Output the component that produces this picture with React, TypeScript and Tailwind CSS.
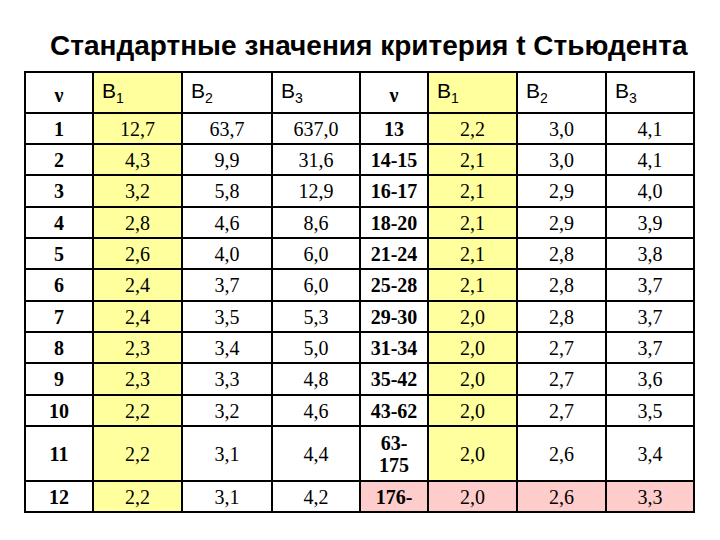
import React from 'react'

type Row = {
  n: string
  a: [string, string, string]
  m: string
  b: [string, string, string]
  h: number
}

const rows: Row[] = [
  { n: '1', a: ['12,7', '63,7', '637,0'], m: '13', b: ['2,2', '3,0', '4,1'], h: 31 },
  { n: '2', a: ['4,3', '9,9', '31,6'], m: '14-15', b: ['2,1', '3,0', '4,1'], h: 31 },
  { n: '3', a: ['3,2', '5,8', '12,9'], m: '16-17', b: ['2,1', '2,9', '4,0'], h: 32 },
  { n: '4', a: ['2,8', '4,6', '8,6'], m: '18-20', b: ['2,1', '2,9', '3,9'], h: 31 },
  { n: '5', a: ['2,6', '4,0', '6,0'], m: '21-24', b: ['2,1', '2,8', '3,8'], h: 31 },
  { n: '6', a: ['2,4', '3,7', '6,0'], m: '25-28', b: ['2,1', '2,8', '3,7'], h: 32 },
  { n: '7', a: ['2,4', '3,5', '5,3'], m: '29-30', b: ['2,0', '2,8', '3,7'], h: 31 },
  { n: '8', a: ['2,3', '3,4', '5,0'], m: '31-34', b: ['2,0', '2,7', '3,7'], h: 31 },
  { n: '9', a: ['2,3', '3,3', '4,8'], m: '35-42', b: ['2,0', '2,7', '3,6'], h: 32 },
  { n: '10', a: ['2,2', '3,2', '4,6'], m: '43-62', b: ['2,0', '2,7', '3,5'], h: 31 },
  { n: '11', a: ['2,2', '3,1', '4,4'], m: '63-175', b: ['2,0', '2,6', '3,4'], h: 55 },
  { n: '12', a: ['2,2', '3,1', '4,2'], m: '176-', b: ['2,0', '2,6', '3,3'], h: 31 },
]

const cell = 'border-2 border-black p-0 text-center align-middle'
const serif = "font-['Liberation_Serif',serif] text-[20px] leading-[22px]"

function BHead({ i, yellow }: { i: number; yellow?: boolean }) {
  return (
    <th
      className={`${cell} text-left align-bottom pb-[3px] pl-[8px] font-normal font-['Liberation_Sans',Arial,sans-serif] text-[21px] leading-[22px] ${yellow ? 'bg-[#ffff9e]' : 'bg-white'}`}
    >
      B<sub className="text-[14px] leading-none relative top-[5px] align-baseline">{i}</sub>
    </th>
  )
}

export default function App() {
  return (
    <div className="w-[720px] h-[540px] bg-white overflow-hidden">
      <h1 className="pt-[30px] pl-[50px] h-[71px] font-['Liberation_Sans',Arial,sans-serif] font-bold text-[28px] leading-[32px] text-black whitespace-nowrap">
        Стандартные значения критерия t Стьюдента
      </h1>
      <table className="ml-[24px] border-collapse table-fixed text-black">
        <colgroup>
          <col className="w-[68px]" />
          <col className="w-[89px]" />
          <col className="w-[90px]" />
          <col className="w-[88px]" />
          <col className="w-[68px]" />
          <col className="w-[89px]" />
          <col className="w-[89px]" />
          <col className="w-[88px]" />
        </colgroup>
        <thead>
          <tr className="h-[41px]">
            <th className={`${cell} ${serif} font-bold pt-[4px]`}>ν</th>
            <BHead i={1} yellow />
            <BHead i={2} />
            <BHead i={3} />
            <th className={`${cell} ${serif} font-bold pt-[4px]`}>ν</th>
            <BHead i={1} yellow />
            <BHead i={2} />
            <BHead i={3} />
          </tr>
        </thead>
        <tbody>
          {rows.map((r, idx) => {
            const last = idx === rows.length - 1
            const right = last ? 'bg-[#ffcccc]' : 'bg-white'
            return (
              <tr key={r.n} style={{ height: r.h }}>
                <td className={`${cell} ${serif} font-bold bg-white`}>{r.n}</td>
                <td className={`${cell} ${serif} bg-[#ffff9e]`}>{r.a[0]}</td>
                <td className={`${cell} ${serif} bg-white`}>{r.a[1]}</td>
                <td className={`${cell} ${serif} bg-white`}>{r.a[2]}</td>
                <td className={`${cell} ${serif} font-bold px-[8px] ${right}`}>{r.m}</td>
                <td className={`${cell} ${serif} ${last ? 'bg-[#ffcccc]' : 'bg-[#ffff9e]'}`}>{r.b[0]}</td>
                <td className={`${cell} ${serif} ${right}`}>{r.b[1]}</td>
                <td className={`${cell} ${serif} ${right}`}>{r.b[2]}</td>
              </tr>
            )
          })}
        </tbody>
      </table>
    </div>
  )
}
